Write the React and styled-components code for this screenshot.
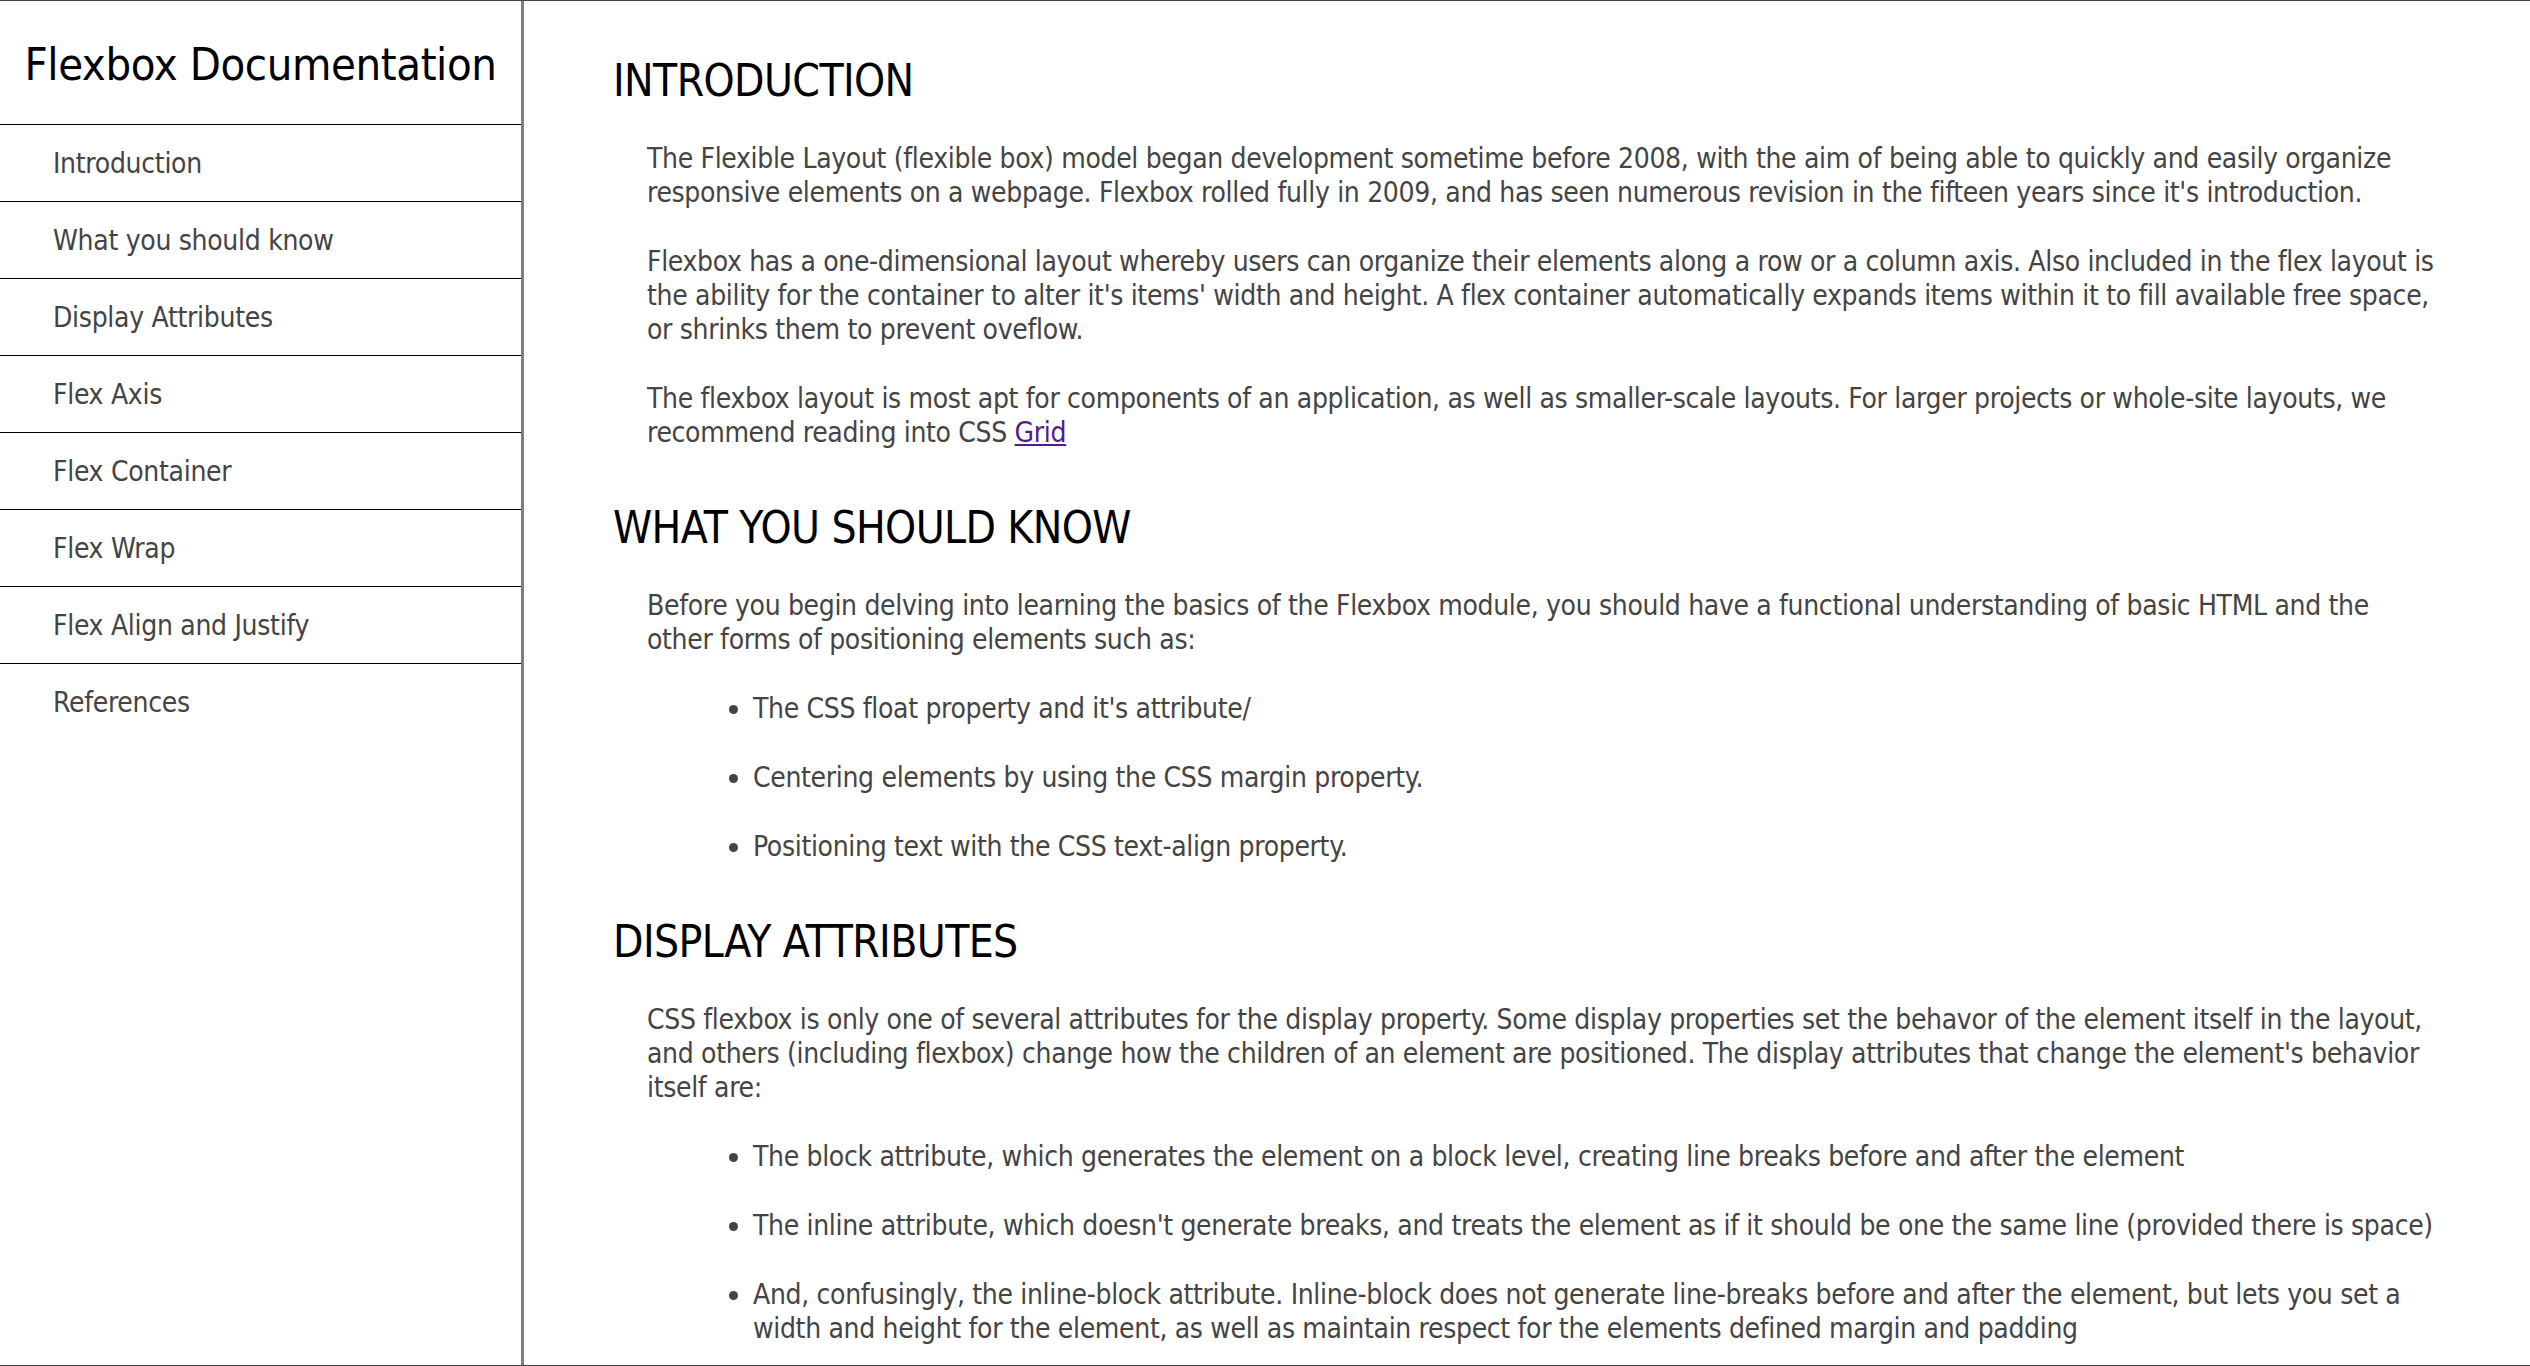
import React from 'react';
import styled, { createGlobalStyle } from 'styled-components';

const GlobalStyle = createGlobalStyle`
  * {
    box-sizing: border-box;
  }
  html, body {
    margin: 0;
    padding: 0;
    background: #fff;
  }
  body {
    font-family: "DejaVu Sans Condensed", "Liberation Sans", sans-serif;
    color: #444;
  }
`;

const Page = styled.div`
  display: flex;
  height: 100vh;
  overflow: hidden;
  border-top: 1px solid #444;
  border-bottom: 1px solid #444;
`;

const Navbar = styled.nav`
  flex: 0 0 524px;
  border-right: 3px solid #808080;
  display: flex;
  flex-direction: column;
`;

const NavHeader = styled.header`
  height: 124px;
  padding-top: 4px;
  display: flex;
  align-items: center;
  justify-content: center;
  border-bottom: 1px solid #000;
  h1 {
    margin: 0;
    font-size: 45px;
    font-weight: normal;
    color: #000;
    letter-spacing: -0.4px;
  }
`;

const NavList = styled.ul`
  list-style: none;
  margin: 0;
  padding: 0;
`;

const NavLink = styled.li`
  height: 77px;
  padding-left: 53px;
  display: flex;
  align-items: center;
  font-size: 28px;
  letter-spacing: -0.3px;
  color: #444;
  border-bottom: ${(p) => (p.$last ? 'none' : '1px solid #000')};
`;

const Main = styled.main`
  flex: 1;
  padding: 54px 92px 0 89px;
  overflow: hidden;
`;

const Section = styled.section`
  padding-bottom: 17px;
`;

const SectionTitle = styled.h2`
  margin: 0 0 35px;
  font-size: 44px;
  line-height: 52px;
  font-weight: normal;
  color: #000;
  letter-spacing: -0.6px;
`;

const Para = styled.p`
  margin: 0 0 35px 34px;
  font-size: 28px;
  line-height: 34px;
  letter-spacing: -0.33px;
  a {
    color: #551a8b;
  }
`;

const List = styled.ul`
  margin: 0 0 35px 34px;
  padding-left: 106px;
  li {
    font-size: 28px;
    line-height: 34px;
    letter-spacing: -0.33px;
    margin-bottom: 35px;
  }
  li:last-child {
    margin-bottom: 0;
  }
`;

const links = [
  'Introduction',
  'What you should know',
  'Display Attributes',
  'Flex Axis',
  'Flex Container',
  'Flex Wrap',
  'Flex Align and Justify',
  'References',
];

export default function App() {
  return (
    <>
      <GlobalStyle />
      <Page>
        <Navbar>
          <NavHeader>
            <h1>Flexbox Documentation</h1>
          </NavHeader>
          <NavList>
            {links.map((l, i) => (
              <NavLink key={l} $last={i === links.length - 1}>{l}</NavLink>
            ))}
          </NavList>
        </Navbar>
        <Main>
          <Section>
            <SectionTitle>INTRODUCTION</SectionTitle>
            <Para>
              The Flexible Layout (flexible box) model began development sometime before 2008, with the aim of being able to quickly and easily organize responsive elements on a webpage. Flexbox rolled fully in 2009, and has seen numerous revision in the fifteen years since it's introduction.
            </Para>
            <Para>
              Flexbox has a one-dimensional layout whereby users can organize their elements along a row or a column axis. Also included in the flex layout is the ability for the container to alter it's items' width and height. A flex container automatically expands items within it to fill available free space, or shrinks them to prevent oveflow.
            </Para>
            <Para>
              The flexbox layout is most apt for components of an application, as well as smaller-scale layouts. For larger projects or whole-site layouts, we recommend reading into CSS <a href="#grid">Grid</a>
            </Para>
          </Section>
          <Section>
            <SectionTitle>WHAT YOU SHOULD KNOW</SectionTitle>
            <Para>
              Before you begin delving into learning the basics of the Flexbox module, you should have a functional understanding of basic HTML and the other forms of positioning elements such as:
            </Para>
            <List>
              <li>The CSS float property and it's attribute/</li>
              <li>Centering elements by using the CSS margin property.</li>
              <li>Positioning text with the CSS text-align property.</li>
            </List>
          </Section>
          <Section>
            <SectionTitle>DISPLAY ATTRIBUTES</SectionTitle>
            <Para>
              CSS flexbox is only one of several attributes for the display property. Some display properties set the behavor of the element itself in the layout, and others (including flexbox) change how the children of an element are positioned. The display attributes that change the element's behavior itself are:
            </Para>
            <List>
              <li>The block attribute, which generates the element on a block level, creating line breaks before and after the element</li>
              <li>The inline attribute, which doesn't generate breaks, and treats the element as if it should be one the same line (provided there is space)</li>
              <li>And, confusingly, the inline-block attribute. Inline-block does not generate line-breaks before and after the element, but lets you set a width and height for the element, as well as maintain respect for the elements defined margin and padding</li>
            </List>
          </Section>
        </Main>
      </Page>
    </>
  );
}
